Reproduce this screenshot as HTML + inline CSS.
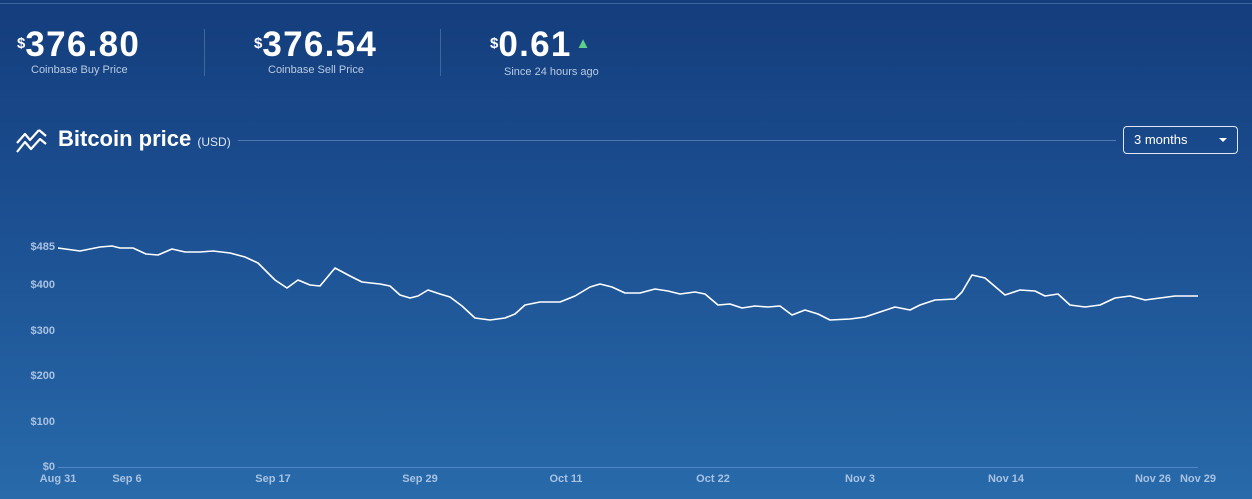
<!DOCTYPE html>
<html><head><meta charset="utf-8"><style>
body{margin:0;width:1252px;height:499px;overflow:hidden;background:linear-gradient(#143d7c,#1c5092 45%,#286aaa);font-family:"Liberation Sans",sans-serif;color:#fff;position:relative}
.top{position:absolute;left:0;right:0;top:3px;height:1px;background:#3b64a0}
.stat{position:absolute;top:26px}
.big{font-size:35px;font-weight:bold;letter-spacing:1.3px;line-height:38px}
.big sup{font-size:15px;vertical-align:top;position:relative;top:-1px;margin-right:0px;letter-spacing:0}
.lbl{font-size:11px;color:#b9cbe3;margin-top:0px}
.sep{position:absolute;top:29px;width:1px;height:47px;background:#3e67a2}
.title{position:absolute;left:58px;top:126px;font-size:22px;font-weight:bold}
.title small{font-size:12px;color:#dfe8f4;font-weight:normal}
.hr{position:absolute;left:238px;right:136px;top:140px;height:1px;background:#4f78b0}
.sel{position:absolute;left:1123px;top:126px;width:115px;height:28px;border:1px solid #dfe8f4;border-radius:4px;font-size:13px;line-height:26px;box-sizing:border-box;padding-left:10px}
.sel:after{content:"";position:absolute;right:10px;top:11px;border:4px solid transparent;border-top:4px solid #fff;border-bottom:0}
.yl{position:absolute;font-size:11px;font-weight:bold;color:#a9c2e2;right:1197px;text-align:right}
.xl{position:absolute;top:473px;font-size:11px;font-weight:bold;color:#a9c2e2;transform:translateX(-50%)}
</style></head><body>
<div class="top"></div>
<div class="stat" style="left:17px"><div class="big"><sup>$</sup>376.80</div><div class="lbl" style="margin-left:14px">Coinbase Buy Price</div></div>
<div class="sep" style="left:204px"></div>
<div class="stat" style="left:254px"><div class="big"><sup>$</sup>376.54</div><div class="lbl" style="margin-left:14px">Coinbase Sell Price</div></div>
<div class="sep" style="left:440px"></div>
<div class="stat" style="left:490px"><div class="big"><sup>$</sup>0.61<span style="color:#5fd08a;font-size:15px;vertical-align:middle;position:relative;top:-3px;margin-left:4px">▲</span></div><div class="lbl" style="margin-left:14px">Since 24 hours ago</div></div>
<svg style="position:absolute;left:16px;top:128px" width="32" height="25" viewBox="0 0 32 25"><path d="M1 15 L9 6 L14 12 L23 2 M1 24 L9 14 L15 21 L24 11 L30 16 M23 2 L30 8" stroke="#fff" stroke-width="2.2" fill="none" stroke-linejoin="round"/></svg>
<div class="title">Bitcoin price <small>(USD)</small></div>
<div class="hr"></div>
<div class="sel">3 months</div>
<div class="yl" style="top:241px">$485</div>
<div class="yl" style="top:279px">$400</div>
<div class="yl" style="top:325px">$300</div>
<div class="yl" style="top:370px">$200</div>
<div class="yl" style="top:416px">$100</div>
<div class="yl" style="top:461px">$0</div>
<div style="position:absolute;left:58px;top:467px;width:1140px;height:1px;background:#4f86c0"></div>
<div class="xl" style="left:58px">Aug 31</div><div class="xl" style="left:127px">Sep 6</div><div class="xl" style="left:273px">Sep 17</div><div class="xl" style="left:420px">Sep 29</div><div class="xl" style="left:566px">Oct 11</div><div class="xl" style="left:713px">Oct 22</div><div class="xl" style="left:860px">Nov 3</div><div class="xl" style="left:1006px">Nov 14</div><div class="xl" style="left:1153px">Nov 26</div><div class="xl" style="left:1198px">Nov 29</div>
<svg style="position:absolute;left:0;top:0" width="1252" height="499"><polyline fill="none" stroke="#fff" stroke-width="1.6" stroke-linejoin="round" points="58,248 80,251 100,247 112,246 120,248 133,248 146,254 158,255 172,249 185,252 200,252 213,251 230,253 245,257 258,263 275,280 287,288 298,280 310,285 320,286 335,268 350,276 362,282 380,284 390,286 400,295 410,298 418,296 428,290 440,294 450,297 462,306 475,318 490,320 505,318 515,314 525,305 540,302 560,302 575,296 590,287 600,284 612,287 625,293 640,293 655,289 668,291 680,294 695,292 705,294 718,305 730,304 742,308 755,306 768,307 780,306 792,315 805,310 818,314 830,320 850,319 865,317 880,312 895,307 910,310 920,305 935,300 955,299 962,292 972,275 985,278 1005,295 1020,290 1035,291 1045,296 1058,294 1070,305 1085,307 1100,305 1115,298 1130,296 1145,300 1160,298 1175,296 1198,296"/></svg>
</body></html>
